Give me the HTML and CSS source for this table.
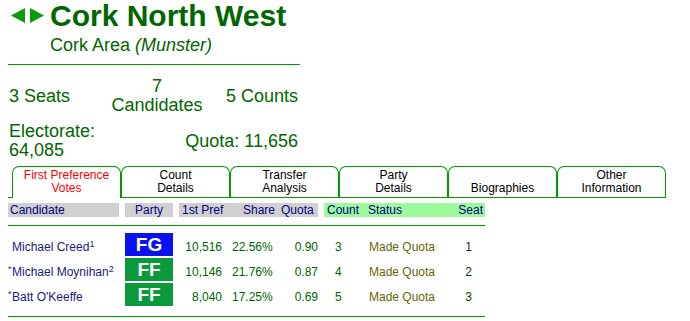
FILE: index.html
```html
<!DOCTYPE html>
<html>
<head>
<meta charset="utf-8">
<link rel="stylesheet" href="styles.css">
</head>
<body>
<div class="title-row">
  <svg class="arrows" width="34" height="15" viewBox="0 0 34 15">
    <polygon points="0,7.5 14,0 14,15" fill="#0a9a0a"/>
    <polygon points="19,0 33,7.5 19,15" fill="#0a9a0a"/>
  </svg>
  <h1 class="title">Cork North West</h1>
</div>
<div class="sub">Cork Area <i>(Munster)</i></div>
<div class="rule"></div>

<div class="stats">
  <div class="st st-left">3 Seats</div>
  <div class="st st-mid">7<br>Candidates</div>
  <div class="st st-right">5 Counts</div>
  <div class="st st-left">Electorate:<br>64,085</div>
  <div class="st st-quota">Quota: 11,656</div>
</div>

<div class="tabs">
  <div class="tab active">First Preference<br>Votes</div>
  <div class="tab">Count<br>Details</div>
  <div class="tab">Transfer<br>Analysis</div>
  <div class="tab">Party<br>Details</div>
  <div class="tab">Biographies</div>
  <div class="tab">Other<br>Information</div>
</div>

<div class="results">
  <div class="row head">
    <div class="h gray h-name">Candidate</div>
    <div></div>
    <div class="h gray h-party">Party</div>
    <div></div>
    <div class="h gray h-pref">1st Pref</div>
    <div class="h gray h-share">Share</div>
    <div class="h gray h-quota">Quota</div>
    <div></div>
    <div class="h green h-count">Count</div>
    <div class="h green h-status">Status</div>
    <div class="h green h-seat">Seat</div>
  </div>
  <div class="line line-top"></div>
  <div class="rows">
    <div class="row data">
      <div class="name"><span class="star hidden">*</span>Michael Creed<sup class="note">1</sup></div>
      <div></div>
      <div class="party fg">FG</div>
      <div></div>
      <div class="num pref">10,516</div>
      <div class="num share">22.56%</div>
      <div class="num quota">0.90</div>
      <div></div>
      <div class="num count">3</div>
      <div class="status">Made Quota</div>
      <div class="seat">1</div>
    </div>
    <div class="row data">
      <div class="name"><span class="star">*</span>Michael Moynihan<sup class="note">2</sup></div>
      <div></div>
      <div class="party ff">FF</div>
      <div></div>
      <div class="num pref">10,146</div>
      <div class="num share">21.76%</div>
      <div class="num quota">0.87</div>
      <div></div>
      <div class="num count">4</div>
      <div class="status">Made Quota</div>
      <div class="seat">2</div>
    </div>
    <div class="row data">
      <div class="name"><span class="star">*</span>Batt O'Keeffe</div>
      <div></div>
      <div class="party ff">FF</div>
      <div></div>
      <div class="num pref">8,040</div>
      <div class="num share">17.25%</div>
      <div class="num quota">0.69</div>
      <div></div>
      <div class="num count">5</div>
      <div class="status">Made Quota</div>
      <div class="seat">3</div>
    </div>
  </div>
  <div class="line line-bottom"></div>
</div>
</body>
</html>
```

FILE: styles.css
```css
html, body {
  margin: 0;
  padding: 0;
  background: #ffffff;
}
body {
  padding-left: 8px;
  font-family: "Liberation Sans", Arial, sans-serif;
}

.title-row {
  display: flex;
  align-items: flex-start;
}
.arrows {
  display: block;
  margin: 8px 0 0 3px;
}
.title {
  margin: 0 0 0 5px;
  font-size: 30px;
  font-weight: bold;
  line-height: 32px;
  color: #006600;
}
.sub {
  margin: 3px 0 0 42px;
  font-size: 18px;
  line-height: 20px;
  color: #006600;
}
.rule {
  margin-top: 9px;
  width: 292px;
  height: 1px;
  background: #009900;
}

.stats {
  margin-top: 12px;
  width: 292px;
  display: grid;
  grid-template-columns: 100px 98px 94px;
  row-gap: 7px;
  align-items: center;
  font-size: 18px;
  line-height: 19px;
  color: #006600;
}
.st-left { padding-left: 1px; }
.st-mid { text-align: center; }
.st-right { text-align: right; padding-right: 2px; }
.st-quota {
  grid-column: 2 / 4;
  text-align: right;
  padding-right: 2px;
}

.tabs {
  margin-top: 6px;
  width: 658px;
  height: 32px;
  box-sizing: border-box;
  padding-left: 4px;
  border-bottom: 1px solid #009900;
  display: flex;
  align-items: flex-start;
}
.tab {
  width: 109px;
  height: 31px;
  box-sizing: border-box;
  border: 1px solid #009900;
  border-bottom: none;
  border-radius: 7px 7px 0 0;
  background: #ffffff;
  display: flex;
  flex-direction: column;
  justify-content: flex-end;
  padding-bottom: 2px;
  text-align: center;
  font-size: 12px;
  line-height: 13px;
  color: #000000;
}
.tab.active {
  height: 32px;
  padding-bottom: 3px;
  color: #ff0000;
}

.results {
  margin-top: 5px;
  width: 477px;
}
.row {
  display: grid;
  grid-template-columns: 111px 6px 48px 6px 53px 46px 40px 6px 40px 90px 31px;
}
.row.head {
  height: 14px;
  font-size: 12px;
  line-height: 13px;
  color: #000080;
}
.h {
  padding-top: 1px;
  white-space: nowrap;
}
.gray { background: #d0d0d0; }
.green { background: #9cf99c; }
.h-name { padding-left: 2px; }
.h-party { text-align: center; }
.h-pref { padding-left: 3px; }
.h-share { padding-left: 11px; }
.h-quota { padding-left: 3px; }
.h-count { padding-left: 3px; }
.h-status { padding-left: 4px; }
.h-seat { text-align: right; padding-right: 2px; }

.line {
  height: 1px;
  background: #009900;
}
.line-top { margin-top: 8px; }
.line-bottom { margin-top: 10px; }

.rows {
  margin-top: 7px;
  display: flex;
  flex-direction: column;
  gap: 2px;
}
.row.data {
  align-items: baseline;
  font-size: 12px;
  line-height: 14px;
}
.name {
  white-space: nowrap;
  color: #1a1a80;
}
.star {
  display: inline-block;
  width: 4px;
  font-size: 9px;
  vertical-align: 4px;
}
.star.hidden { visibility: hidden; }
.note {
  font-size: 9px;
  line-height: 0;
  vertical-align: 4px;
}
.party {
  height: 23px;
  font-size: 19px;
  line-height: 23px;
  font-weight: bold;
  color: #ffffff;
  text-align: center;
}
.fg { background: #0b12f2; }
.ff { background: #0a9a3c; }
.num {
  color: #006600;
  text-align: right;
}
.pref { padding-right: 10px; }
.share { padding-right: 6px; }
.quota { padding-right: 0; }
.count {
  text-align: left;
  padding-left: 11px;
}
.status {
  padding-left: 5px;
  color: #666600;
}
.seat {
  text-align: center;
  padding-right: 2px;
  color: #004400;
}
```
